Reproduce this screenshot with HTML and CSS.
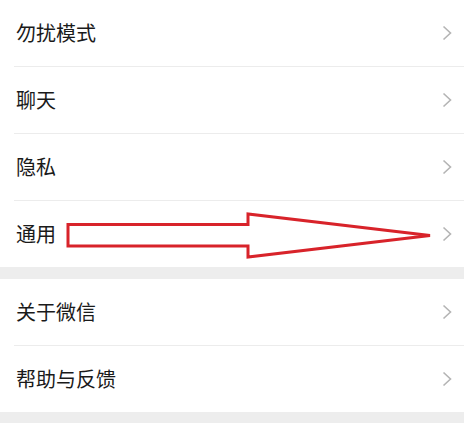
FILE: index.html
```html
<!DOCTYPE html>
<html lang="zh-CN">

<head>
    <meta charset="UTF-8">
    <meta name="viewport" content="width=device-width, initial-scale=1.0">
    <title>设置</title>
    <link rel="stylesheet" href="styles.css">
</head>

<body>
    <div class="page">
        <div class="group">
            <div class="cell"><span class="cell-title">勿扰模式</span><svg class="chevron" viewBox="0 0 10 16"><polyline points="1.5,1.5 8.5,8 1.5,14.5" /></svg></div>
            <div class="cell"><span class="cell-title">聊天</span><svg class="chevron" viewBox="0 0 10 16"><polyline points="1.5,1.5 8.5,8 1.5,14.5" /></svg></div>
            <div class="cell"><span class="cell-title">隐私</span><svg class="chevron" viewBox="0 0 10 16"><polyline points="1.5,1.5 8.5,8 1.5,14.5" /></svg></div>
            <div class="cell"><span class="cell-title">通用</span><svg class="chevron" viewBox="0 0 10 16"><polyline points="1.5,1.5 8.5,8 1.5,14.5" /></svg></div>
        </div>
        <div class="gap"></div>
        <div class="group">
            <div class="cell"><span class="cell-title">关于微信</span><svg class="chevron" viewBox="0 0 10 16"><polyline points="1.5,1.5 8.5,8 1.5,14.5" /></svg></div>
            <div class="cell"><span class="cell-title">帮助与反馈</span><svg class="chevron" viewBox="0 0 10 16"><polyline points="1.5,1.5 8.5,8 1.5,14.5" /></svg></div>
        </div>
        <div class="gap gap-last"></div>

        <!-- 红色箭头标注 -->
        <svg class="mark" viewBox="0 0 464 429">
            <polygon points="68,224.5 248,224.5 248,214 430,235.5 248,257 248,246 68,246" />
        </svg>
    </div>
</body>

</html>
```

FILE: styles.css
```css
body {
    margin: 0;
    padding: 0;
    background: #fff;
    font-family: "Noto Sans CJK SC", "Noto Sans", sans-serif;
    color: #1a1a1a;
}

.page {
    position: relative;
    width: 464px;
    height: 429px;
    overflow: hidden;
}

.group {
    background: #fff;
}

.cell {
    display: flex;
    align-items: center;
    justify-content: space-between;
    height: 66px;
    margin-left: 14px;
    padding: 0 12px 0 2px;
    border-bottom: 1px solid #ececec;
}

.cell:last-child {
    height: 66px;
    border-bottom: none;
}

.cell-title {
    font-size: 20px;
    line-height: 1;
}

.chevron {
    width: 10px;
    height: 16px;
}

.chevron polyline {
    fill: none;
    stroke: #b4b4b4;
    stroke-width: 1.6;
}

.gap {
    height: 12px;
    background: #ededed;
}

.gap-last {
    height: 11px;
}

.mark {
    position: absolute;
    top: 0;
    left: 0;
    width: 464px;
    height: 429px;
    pointer-events: none;
}

.mark polygon {
    fill: none;
    stroke: #d8232a;
    stroke-width: 3;
    stroke-linejoin: miter;
}
```
